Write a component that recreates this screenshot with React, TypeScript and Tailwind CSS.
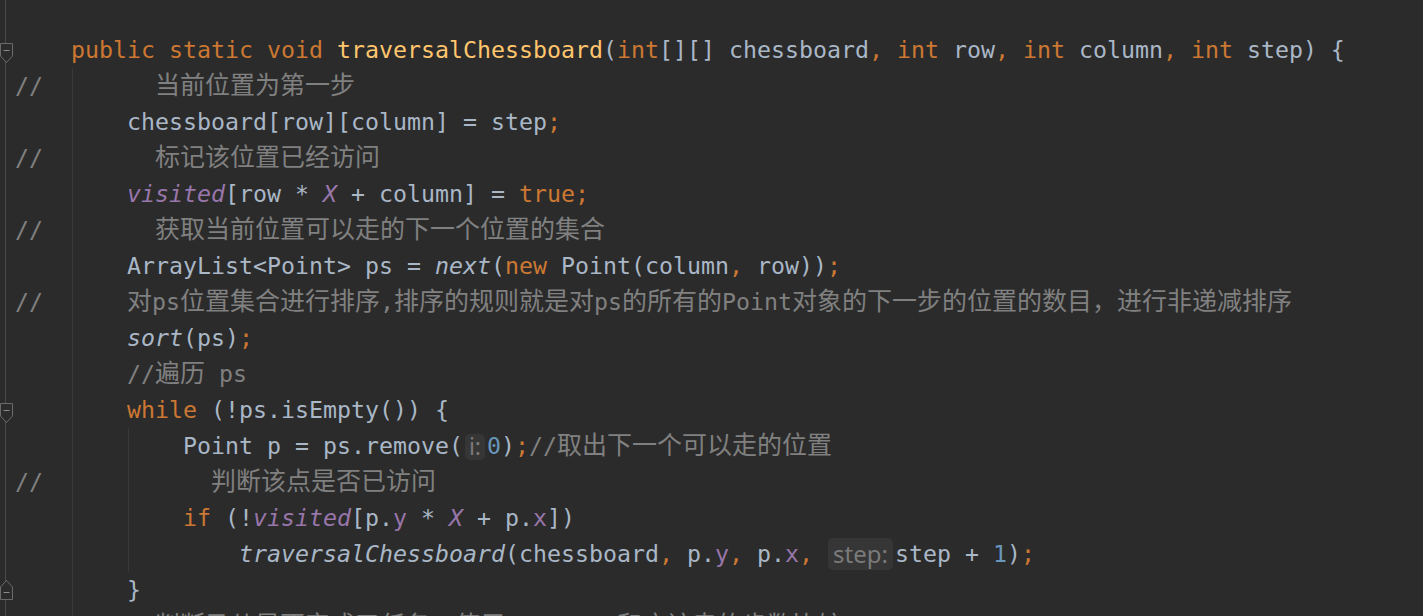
import React from "react";

type Kind = "t" | "k" | "f" | "c" | "p" | "pi" | "i" | "n" | "hint";
type Seg = [string, Kind];

const COLORS: Record<Kind, string> = {
  t: "text-[#a9b7c6]",
  k: "text-[#cc7832]",
  f: "text-[#ffc66d]",
  c: "text-[#808080]",
  p: "text-[#9876aa]",
  pi: "text-[#9876aa] italic",
  i: "text-[#a9b7c6] italic",
  n: "text-[#6897bb]",
  hint: "",
};

const LINES: Seg[][] = [
  [["    ", "t"], ["public static void ", "k"], ["traversalChessboard", "f"], ["(", "t"], ["int", "k"], ["[][] chessboard", "t"], [", ", "k"], ["int", "k"], [" row", "t"], [", ", "k"], ["int", "k"], [" column", "t"], [", ", "k"], ["int", "k"], [" step) {", "t"]],
  [["//        当前位置为第一步", "c"]],
  [["        chessboard[row][column] = step", "t"], [";", "k"]],
  [["//        标记该位置已经访问", "c"]],
  [["        ", "t"], ["visited", "pi"], ["[row * ", "t"], ["X", "pi"], [" + column] = ", "t"], ["true;", "k"]],
  [["//        获取当前位置可以走的下一个位置的集合", "c"]],
  [["        ArrayList<Point> ps = ", "t"], ["next", "i"], ["(", "t"], ["new ", "k"], ["Point(column", "t"], [", ", "k"], ["row))", "t"], [";", "k"]],
  [["//      对ps位置集合进行排序,排序的规则就是对ps的所有的Point对象的下一步的位置的数目，进行非递减排序", "c"]],
  [["        ", "t"], ["sort", "i"], ["(ps)", "t"], [";", "k"]],
  [["        //遍历 ps", "c"]],
  [["        ", "t"], ["while ", "k"], ["(!ps.isEmpty()) {", "t"]],
  [["            Point p = ps.remove(", "t"], ["i:", "hint"], ["0", "n"], [")", "t"], [";", "k"], ["//取出下一个可以走的位置", "c"]],
  [["//            判断该点是否已访问", "c"]],
  [["            ", "t"], ["if ", "k"], ["(!", "t"], ["visited", "pi"], ["[p.", "t"], ["y", "p"], [" * ", "t"], ["X", "pi"], [" + p.", "t"], ["x", "p"], ["])", "t"]],
  [["                ", "t"], ["traversalChessboard", "i"], ["(chessboard", "t"], [", ", "k"], ["p.", "t"], ["y", "p"], [", ", "k"], ["p.", "t"], ["x", "p"], [", ", "k"], ["step:", "hint"], ["step + ", "t"], ["1", "n"], [")", "t"], [";", "k"]],
  [["        }", "t"]],
  [["        //判断马儿是否完成了任务，使用   step 和应该走的步数比较 ，", "c"]],
];

// indent guides: [column offset class, first line, last line]
const GUIDES: [string, number, number][] = [
  ["left-[57px]", 1, 16],
  ["left-[113px]", 11, 14],
];

const CJK = /([\u3000-\u9fff\uff00-\uffef]+)/;

function Text({ text }: { text: string }) {
  return (
    <>
      {text.split(CJK).map((part, i) =>
        CJK.test(part) ? (
          <span key={i} className="font-['Noto_Sans_CJK_SC',sans-serif] text-[25px] leading-[20px]">
            {part}
          </span>
        ) : (
          part
        )
      )}
    </>
  );
}

function Hint({ label }: { label: string }) {
  const wide = label.length > 2;
  return (
    <span
      className={
        "inline-flex items-center justify-center align-middle rounded-[5px] bg-[#363636] text-[#7a7a7a] font-['Noto_Sans',sans-serif] leading-none " +
        (wide ? "ml-px mr-[2px] w-[65px] h-8 text-[24px] -mt-[3px]" : "ml-[2px] mr-[2px] w-5 h-[26px] text-[23px] -mt-[2px]")
      }
    >
      {label}
    </span>
  );
}

function FoldMarker({ up }: { up?: boolean }) {
  return (
    <svg width="13" height="20" viewBox="0 0 13 20" className={up ? "rotate-180" : ""}>
      <path d="M0.5 0.5 H12.5 V13 L6.5 19.5 L0.5 13 Z" fill="#2b2b2b" stroke="#6b6b6b" />
      <path d="M3.5 7.5 H9.5" stroke="#8a8a8a" />
    </svg>
  );
}

function GutterCell({ h, marker }: { h: string; marker?: "down" | "up" }) {
  return (
    <div className={"relative w-[15px] shrink-0 " + h}>
      <div className="ml-[5px] w-px h-full bg-[#4b4b4b]" />
      {marker === "down" && (
        <div className="absolute left-0 top-[11px]">
          <FoldMarker />
        </div>
      )}
      {marker === "up" && (
        <div className="absolute left-0 top-2">
          <FoldMarker up />
        </div>
      )}
    </div>
  );
}

export default function App() {
  const markers: Record<number, "down" | "up"> = { 0: "down", 10: "down", 15: "up" };
  return (
    <div className="h-[616px] w-full overflow-hidden bg-[#2b2b2b] font-['DejaVu_Sans_Mono',monospace] text-[23.25px]">
      <div className="flex">
        <GutterCell h="h-8" />
      </div>
      {LINES.map((segs, li) => (
        <div key={li} className="flex h-9">
          <GutterCell h="h-9" marker={markers[li]} />
          <div className="relative flex-1 whitespace-pre leading-9">
            {GUIDES.filter(([, a, b]) => li >= a && li <= b).map(([cls]) => (
              <div key={cls} className={"absolute top-0 bottom-0 w-px bg-[#393939] " + cls} />
            ))}
            <span className="relative">
              {segs.map(([text, kind], si) =>
                kind === "hint" ? (
                  <Hint key={si} label={text} />
                ) : (
                  <span key={si} className={COLORS[kind]}>
                    <Text text={text} />
                  </span>
                )
              )}
            </span>
          </div>
        </div>
      ))}
    </div>
  );
}
